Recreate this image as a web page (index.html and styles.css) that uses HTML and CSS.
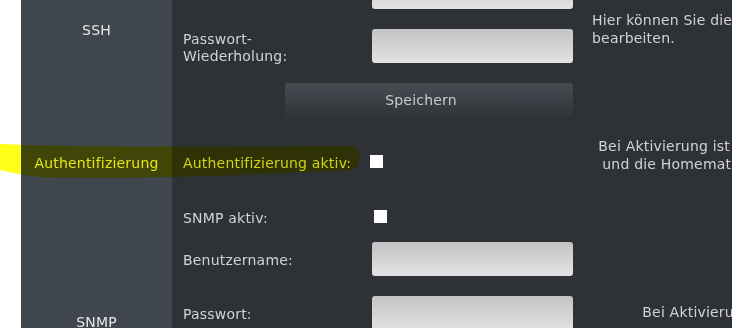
FILE: index.html
```html
<!DOCTYPE html>
<html lang="de">
<head>
  <meta charset="UTF-8" />
  <meta name="viewport" content="width=device-width, initial-scale=1.0"/>
  <title>Einstellungen - Sicherheit</title>
  <link rel="stylesheet" href="styles.css">
</head>
<body>
  <div class="page">

    <section class="sec sec-ssh">
      <div class="cat">SSH</div>
      <div class="fields">
        <div class="row row-check">
          <label class="lbl">SSH aktiv:</label>
          <input type="checkbox" class="chk">
        </div>
        <div class="row">
          <label class="lbl">Passwort:</label>
          <input type="password" class="txt">
        </div>
        <div class="row">
          <label class="lbl">Passwort-<br>Wiederholung:</label>
          <input type="password" class="txt">
        </div>
        <div class="row row-btn">
          <button class="btn">Speichern</button>
        </div>
      </div>
      <div class="desc desc-left">Hier können Sie die Zugangsdaten für den SSH-Zugang<br>bearbeiten.</div>
    </section>

    <section class="sec sec-auth">
      <div class="cat">Authentifizierung</div>
      <div class="fields">
        <div class="row row-check">
          <label class="lbl">Authentifizierung aktiv:</label>
          <input type="checkbox" class="chk chk-l">
        </div>
      </div>
      <div class="desc desc-auth">Bei Aktivierung ist der Zugriff auf die<br>und die Homematic-RPC-API nur mit</div>
    </section>

    <section class="sec sec-snmp">
      <div class="cat">SNMP</div>
      <div class="fields">
        <div class="row row-check">
          <label class="lbl">SNMP aktiv:</label>
          <input type="checkbox" class="chk chk-r">
        </div>
        <div class="row">
          <label class="lbl">Benutzername:</label>
          <input type="text" class="txt">
        </div>
        <div class="row">
          <label class="lbl">Passwort:</label>
          <input type="password" class="txt">
        </div>
        <div class="row">
          <label class="lbl">Passwort-<br>Wiederholung:</label>
          <input type="password" class="txt">
        </div>
        <div class="row">
          <label class="lbl">Community:</label>
          <input type="text" class="txt">
        </div>
      </div>
      <div class="desc desc-snmp">Bei Aktivierung kann das</div>
    </section>

  </div>

  <!-- marker stroke drawn over the screenshot -->
  <svg class="marker" viewBox="0 0 365 45">
    <path d="M0 4 C 100 8, 250 6, 352 6 C 362 9, 362 27, 352 30 C 250 35, 120 40, 40 37 C 20 35, 6 31, 0 30 Z" fill="#ffff00" />
  </svg>
</body>
</html>
```

FILE: styles.css
```css
* {
  margin: 0;
  padding: 0;
  box-sizing: border-box;
}

body {
  background: #fff;
  overflow: hidden;
  font-family: "DejaVu Sans", Verdana, sans-serif;
  font-size: 14px;
  letter-spacing: 0.2px;
  color: #d2d2d2;
}

.page {
  width: 851px;
  margin: -75px 0 0 21px;
}

.sec {
  display: flex;
  background: #2e3237;
}

.cat {
  width: 151px;
  flex: none;
  background: #40464e;
  display: flex;
  align-items: center;
  justify-content: center;
  color: #e6e6e6;
  line-height: 18px;
}

.sec-auth .cat {
  padding-top: 4px;
}

.fields {
  width: 420px;
  flex: none;
  display: flex;
  flex-direction: column;
  gap: 20px;
  padding: 20px 19px 18px 11px;
}

.sec-ssh .fields {
  padding-top: 15px;
}

.sec-snmp .fields {
  padding-top: 22px;
}

.row {
  display: flex;
  align-items: center;
  min-height: 34px;
}

.row-check {
  min-height: 0;
  height: 15px;
}

.sec-snmp .row-check {
  margin-bottom: -2px;
}

.row-btn {
  min-height: 0;
}

.lbl {
  width: 189px;
  flex: none;
  line-height: 17px;
  margin: 1.5px 0 -1.5px;
}

.txt {
  width: 201px;
  height: 34px;
  border: none;
  border-radius: 3px;
  background: linear-gradient(#c3c3c3, #e3e3e3);
}

.chk {
  appearance: none;
  -webkit-appearance: none;
  width: 13px;
  height: 13px;
  margin: 0;
  border: none;
  background: #fff;
}

.chk-l { margin-left: -2px; }
.chk-r { margin-left: 2px; }

.btn {
  margin-left: 102px;
  width: 288px;
  height: 33px;
  padding-right: 16px;
  border: none;
  border-radius: 3px;
  background: linear-gradient(#484c53, #31353a);
  color: #cacaca;
  font: inherit;
  letter-spacing: inherit;
}

.desc {
  flex: none;
  width: 280px;
  align-self: center;
  text-align: center;
  line-height: 17.5px;
  white-space: nowrap;
}

.desc-left {
  text-align: left;
}

.desc-auth {
  align-self: flex-start;
  margin-top: 4px;
}

.desc-snmp {
  align-self: flex-start;
  margin-top: 117px;
}

.marker {
  position: absolute;
  left: 0;
  top: 140px;
  width: 365px;
  height: 45px;
  opacity: 0.9;
  mix-blend-mode: multiply;
}
```
